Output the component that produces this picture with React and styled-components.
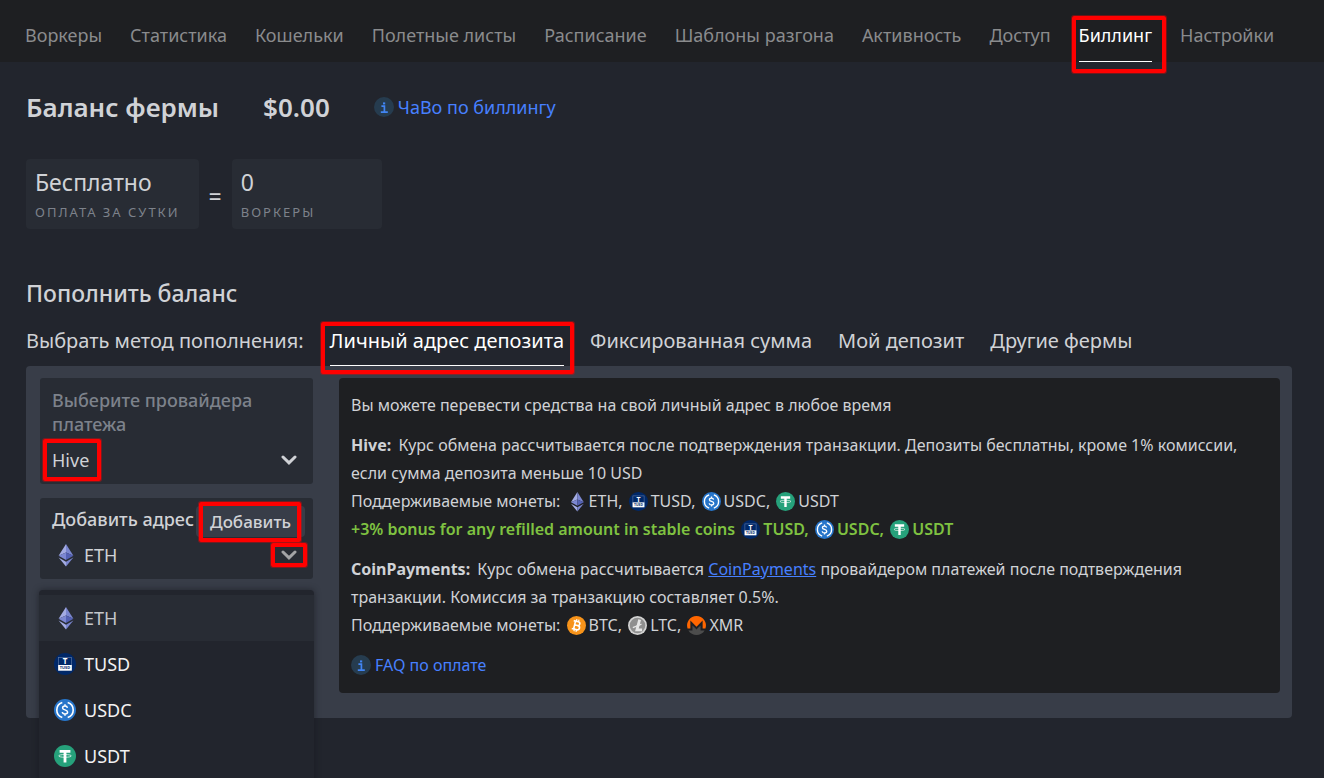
import { useState } from 'react'
import styled, { createGlobalStyle } from 'styled-components'

const navItems = [
    'Воркеры',
    'Статистика',
    'Кошельки',
    'Полетные листы',
    'Расписание',
    'Шаблоны разгона',
    'Активность',
    'Доступ',
    'Биллинг',
    'Настройки',
]

const methods = ['Личный адрес депозита', 'Фиксированная сумма', 'Мой депозит', 'Другие фермы']

const addressCoins = ['ETH', 'TUSD', 'USDC', 'USDT']

function EthLogo() {
    return (
        <g transform="translate(1 0)">
            <polygon points="11,0 3.6,11.8 11,8.6" fill="#a3abe3" />
            <polygon points="11,0 18.4,11.8 11,8.6" fill="#7a86cf" />
            <polygon points="3.6,11.8 11,8.6 11,16" fill="#7c87d2" />
            <polygon points="18.4,11.8 11,8.6 11,16" fill="#5461b4" />
            <polygon points="3.6,13.6 11,17.8 11,22.5" fill="#a3abe3" />
            <polygon points="18.4,13.6 11,17.8 11,22.5" fill="#7a86cf" />
        </g>
    )
}

function TusdLogo() {
    return (
        <>
            <circle cx="11" cy="11" r="11" fill="#002868" />
            <rect x="4.5" y="4.5" width="13" height="13" fill="none" stroke="#5b76a3" strokeWidth="0.7" />
            <rect x="4.2" y="12" width="13.6" height="5.6" fill="#fff" />
            <text x="11" y="11" textAnchor="middle" fontSize="8" fontWeight="700" fill="#fff">T</text>
            <text x="11" y="16.4" textAnchor="middle" fontSize="4" fontWeight="700" fill="#002868">TUSD</text>
        </>
    )
}

function UsdcLogo() {
    return (
        <>
            <circle cx="11" cy="11" r="11" fill="#2775ca" />
            <path d="M8.3 3.4a8 8 0 0 0 0 15.2M13.7 3.4a8 8 0 0 1 0 15.2" fill="none" stroke="#fff" strokeWidth="1.6" />
            <path
                d="M13.4 8.9c-.2-1.2-1-1.8-2.4-1.8-1.5 0-2.4.7-2.4 1.8 0 2.6 5 1.3 5 4.1 0 1.2-1 2-2.6 2-1.6 0-2.5-.7-2.7-2M11 5.3v1.8M11 15v1.8"
                fill="none"
                stroke="#fff"
                strokeWidth="1.5"
            />
        </>
    )
}

function UsdtLogo() {
    return (
        <>
            <circle cx="11" cy="11" r="11" fill="#26a17b" />
            <path d="M5.6 5h10.8v2.8h-4v9.7H9.6V7.8h-4z" fill="#fff" />
            <ellipse cx="11" cy="10.9" rx="6.4" ry="1.4" fill="none" stroke="#fff" strokeWidth="0.7" />
        </>
    )
}

function BtcLogo() {
    return (
        <>
            <circle cx="11" cy="11" r="11" fill="#f7931a" />
            <g transform="rotate(14 11 11)" fill="none" stroke="#fff" strokeWidth="1.9">
                <path d="M6.5 6.3h5.5a2.2 2.2 0 0 1 0 4.5H8.5M12 10.8h.6a2.4 2.4 0 0 1 0 4.9H6.5M8.7 6.3v9.4" />
                <path d="M9.7 3.8v2.5M12.2 3.8v2.5M9.7 15.7v2.5M12.2 15.7v2.5" strokeWidth="1.4" />
            </g>
        </>
    )
}

function LtcLogo() {
    return (
        <>
            <circle cx="11" cy="11" r="11" fill="#d3d3d3" />
            <circle cx="11" cy="11" r="9" fill="#8f8f8f" />
            <path d="M13.5 4.2 10.3 16h6" fill="none" stroke="#e6e6e6" strokeWidth="3.2" />
            <path d="M5.6 13.4l10-4" fill="none" stroke="#e6e6e6" strokeWidth="1.6" />
        </>
    )
}

function XmrLogo() {
    return (
        <>
            <path d="M11 0a11 11 0 0 0-10.4 14.5h3.3V5.3L11 12.4l7.100-7.100v9.200h3.300A11 11 0 0 0 11 0z" fill="#ff6600" />
            <path d="M9.4 14 6.3 10.9v5.8H1.6a11 11 0 0 0 18.8 0h-4.7v-5.8L12.6 14 11 15.6z" fill="#4c4c4c" />
        </>
    )
}

const logos = {
    ETH: EthLogo,
    TUSD: TusdLogo,
    USDC: UsdcLogo,
    USDT: UsdtLogo,
    BTC: BtcLogo,
    LTC: LtcLogo,
    XMR: XmrLogo,
}

function CoinIcon({ coin, size = 22 }) {
    const Logo = logos[coin]
    return (
        <CoinSvg width={size} height={size} viewBox="0 0 22 22" aria-hidden="true">
            <Logo />
        </CoinSvg>
    )
}

function CoinList({ coins }) {
    return coins.map((coin, i) => (
        <span key={coin}>
            {' '}
            <InlineCoin>
                <CoinIcon coin={coin} size={19} />
                {coin}
                {i < coins.length - 1 && ','}
            </InlineCoin>
        </span>
    ))
}

function Chevron() {
    return (
        <svg width="16" height="10" viewBox="0 0 16 10" fill="none" aria-hidden="true">
            <path d="M2 2l6 5.800L14 2" stroke="currentColor" strokeWidth="3" strokeLinecap="round" />
        </svg>
    )
}

function InfoIcon() {
    return (
        <svg width="20" height="20" viewBox="0 0 20 20" aria-hidden="true">
            <circle cx="10" cy="10" r="10" fill="#263c4f" />
            <path d="M7.4 9.2h3v5.8M6.8 15.200h7" fill="none" stroke="#4285f4" strokeWidth="1.7" />
            <rect x="9" y="5.4" width="2.2" height="2" fill="#4285f4" />
        </svg>
    )
}

function App() {
    const [method, setMethod] = useState(methods[0])
    const [coin, setCoin] = useState('ETH')
    const [open, setOpen] = useState(true)

    return (
        <Container>
            <GlobalStyle />
            <Nav>
                {navItems.map((item) => (
                    <NavLink key={item} href="#" $active={item === 'Биллинг'}>
                        {item}
                        {item === 'Биллинг' && <Marker $inset="16px -14px -12px -7px" />}
                    </NavLink>
                ))}
            </Nav>
            <Wrapper>
                <Header>
                    <Title>Баланс фермы</Title>
                    <Balance>$0.00</Balance>
                    <InfoLink href="#" $size="18px">
                        <InfoIcon />
                        ЧаВо по биллингу
                    </InfoLink>
                </Header>
                <Stats>
                    <Stat>
                        <StatValue>Бесплатно</StatValue>
                        <StatName>Оплата за сутки</StatName>
                    </Stat>
                    <Equals>=</Equals>
                    <Stat>
                        <StatValue>0</StatValue>
                        <StatName>Воркеры</StatName>
                    </Stat>
                </Stats>

                <SubTitle>Пополнить баланс</SubTitle>
                <Methods>
                    <span>Выбрать метод пополнения:</span>
                    {methods.map((item) => (
                        <Method key={item} type="button" $active={item === method} onClick={() => setMethod(item)}>
                            {item}
                            {item === methods[0] && <Marker $inset="-4px -10px -9px -9px" />}
                        </Method>
                    ))}
                </Methods>

                <Panel>
                    <Side>
                        <Card>
                            <ProviderLabel htmlFor="provider">Выберите провайдера платежа</ProviderLabel>
                            <SelectRow>
                                <Select id="provider" defaultValue="Hive">
                                    <option>Hive</option>
                                    <option>CoinPayments</option>
                                </Select>
                                <SelectArrow>
                                    <Chevron />
                                </SelectArrow>
                                <Marker $inset="3px auto 2px -9px" $width="58px" />
                            </SelectRow>
                        </Card>
                        <AddressCard>
                            <AddressTop>
                                <AddressLabel id="address-label">Добавить адрес</AddressLabel>
                                <AddButton type="button">
                                    Добавить
                                    <Marker $inset="-4px 4px -5px 3px" />
                                </AddButton>
                            </AddressTop>
                            <CoinButton
                                type="button"
                                aria-labelledby="address-label"
                                aria-haspopup="listbox"
                                aria-expanded={open}
                                onClick={() => setOpen(!open)}
                            >
                                <CoinIcon coin={coin} />
                                <CoinName>{coin}</CoinName>
                                <Arrow>
                                    <Chevron />
                                    <Marker $inset="-7px -10px" />
                                </Arrow>
                            </CoinButton>
                            {open && (
                                <Menu role="listbox" aria-labelledby="address-label">
                                    {addressCoins.map((item) => (
                                        <Option
                                            key={item}
                                            role="option"
                                            aria-selected={item === coin}
                                            $selected={item === coin}
                                            onClick={() => setCoin(item)}
                                        >
                                            <CoinIcon coin={item} />
                                            <CoinName>{item}</CoinName>
                                        </Option>
                                    ))}
                                </Menu>
                            )}
                        </AddressCard>
                    </Side>
                    <Info>
                        <Text>Вы можете перевести средства на свой личный адрес в любое время</Text>
                        <Text>
                            <Provider>Hive:</Provider> Курс обмена рассчитывается после подтверждения транзакции.
                            Депозиты бесплатны, кроме 1% комиссии, если сумма депозита меньше 10 USD
                            <br />
                            Поддерживаемые монеты:
                            <CoinList coins={['ETH', 'TUSD', 'USDC', 'USDT']} />
                            <br />
                            <Bonus>
                                +3% bonus for any refilled amount in stable coins
                                <CoinList coins={['TUSD', 'USDC', 'USDT']} />
                            </Bonus>
                        </Text>
                        <Text>
                            <Provider>CoinPayments:</Provider> Курс обмена рассчитывается{' '}
                            <TextLink href="#">CoinPayments</TextLink> провайдером платежей после подтверждения
                            транзакции. Комиссия за транзакцию составляет 0.5%.
                            <br />
                            Поддерживаемые монеты:
                            <CoinList coins={['BTC', 'LTC', 'XMR']} />
                        </Text>
                        <InfoLink href="#" $size="16px">
                            <InfoIcon />
                            FAQ по оплате
                        </InfoLink>
                    </Info>
                </Panel>
            </Wrapper>
        </Container>
    )
}

const GlobalStyle = createGlobalStyle`
  html {
    scrollbar-width: none;
  }
  body {
    margin: 0;
    background-color: #22252d;
  }
  *, *::before, *::after {
    box-sizing: border-box;
  }
  button, select {
    font: inherit;
    color: inherit;
    border: none;
    background: none;
    padding: 0;
    cursor: pointer;
  }
`

const Container = styled.div`
  min-height: 100vh;
  font-family: "Noto Sans", "Open Sans", sans-serif;
  font-size: 16px;
  color: #d0d2d6;
`
/* red frame drawn around the control the guide points at */
const Marker = styled.span.attrs({ 'aria-hidden': true })`
  position: absolute;
  inset: ${(props) => props.$inset};
  width: ${(props) => props.$width};
  border: 4px solid #ff0000;
  border-radius: 2px;
  box-shadow: 0 0 0 1px rgba(255, 0, 0, 0.35);
  pointer-events: none;
  z-index: 3;
`
const Nav = styled.nav`
  display: flex;
  gap: 28px;
  padding: 0 25px;
  background-color: #1e1f22;
`
const NavLink = styled.a`
  position: relative;
  padding: 22px 0 13px;
  border-bottom: 1px solid ${(props) => (props.$active ? '#fff' : 'transparent')};
  font-size: 18px;
  line-height: 26px;
  white-space: nowrap;
  text-decoration: none;
  color: ${(props) => (props.$active ? '#fff' : '#8a8b8d')};
`
const Wrapper = styled.main`
  padding: 27px 32px 60px 26px;
`
const Header = styled.div`
  display: flex;
  align-items: center;
  gap: 44px;
  line-height: 36px;
`
const Title = styled.h1`
  margin: 0;
  font-size: 26px;
  font-weight: 600;
`
const Balance = styled.div`
  font-size: 26px;
  font-weight: 600;
`
const InfoLink = styled.a`
  display: flex;
  align-items: center;
  gap: 4px;
  font-size: ${(props) => props.$size};
  text-decoration: none;
  color: #4780ff;
`
const Stats = styled.div`
  display: flex;
  align-items: center;
  gap: 10px;
  margin-top: 34px;
`
const Stat = styled.div`
  min-width: 150px;
  padding: 6px 19px 4px 9px;
  border-radius: 4px;
  background-color: #282c34;
`
const StatValue = styled.div`
  font-size: 23px;
  line-height: 34px;
`
const StatName = styled.div`
  font-size: 13px;
  line-height: 26px;
  letter-spacing: 2px;
  text-transform: uppercase;
  color: #7d828b;
`
const Equals = styled.div`
  padding-top: 4px;
  font-size: 23px;
`
const SubTitle = styled.h2`
  margin: 48px 0 17px;
  font-size: 23px;
  line-height: 32px;
  font-weight: 500;
`
const Methods = styled.div`
  display: flex;
  gap: 26px;
  font-size: 20px;
  line-height: 30px;
`
const Method = styled.button`
  position: relative;
  padding-bottom: 9px;
  border-bottom: 1px solid ${(props) => (props.$active ? '#fff' : 'transparent')};
  color: ${(props) => props.$active && '#fff'};
`
const Panel = styled.section`
  display: flex;
  align-items: flex-start;
  gap: 26px;
  padding: 12px 12px 25px 14px;
  border-radius: 4px;
  background-color: #383d48;
`
const Side = styled.div`
  display: flex;
  flex-direction: column;
  flex: 0 0 273px;
  gap: 14px;
`
const Card = styled.div`
  padding: 10px 12px 1px;
  border-radius: 3px;
  background-color: #282c34;
`
const ProviderLabel = styled.label`
  display: block;
  font-size: 18px;
  line-height: 24px;
  font-weight: 500;
  color: #7d828b;
`
const SelectRow = styled.div`
  position: relative;
  display: grid;
  align-items: center;
`
const Select = styled.select`
  grid-area: 1 / 1;
  width: 100%;
  height: 47px;
  font-size: 18px;
  appearance: none;
`
const SelectArrow = styled.span`
  grid-area: 1 / 1;
  display: flex;
  justify-self: end;
  margin-right: 4px;
  pointer-events: none;
`
const AddressCard = styled.div`
  position: relative;
  padding: 8px 8px 7px 12px;
  border-radius: 3px;
  background-color: #282c34;
`
const AddressTop = styled.div`
  display: flex;
  align-items: flex-start;
  justify-content: space-between;
`
const AddressLabel = styled.span`
  font-size: 18px;
  line-height: 27px;
  font-weight: 500;
  white-space: nowrap;
`
const AddButton = styled.button`
  position: relative;
  height: 31px;
  padding: 0 14px;
  border-radius: 4px;
  font-size: 17px;
  font-weight: 500;
  background-color: #383d48;
`
const CoinButton = styled.button`
  display: flex;
  align-items: center;
  width: 100%;
  height: 35px;
  padding: 0 8px 0 2px;
  text-align: left;
`
const CoinSvg = styled.svg`
  flex: none;
  overflow: visible;
`
const CoinName = styled.span`
  flex: 1;
  padding-left: 8px;
  font-size: 18px;
`
const Arrow = styled.span`
  position: relative;
  display: flex;
  color: #a3a4a6;
`
const Menu = styled.ul`
  position: absolute;
  top: calc(100% + 11px);
  left: -1px;
  right: -1px;
  z-index: 2;
  margin: 0;
  padding: 5px 0;
  border-radius: 4px;
  list-style: none;
  background-color: #22252d;
  box-shadow: 0 0 6px rgba(20, 22, 26, 0.6);
`
const Option = styled.li`
  display: flex;
  align-items: center;
  height: 46px;
  padding: 0 15px;
  color: ${(props) => (props.$selected ? '#c4c6ca' : '#f2f2f2')};
  background-color: ${(props) => props.$selected && '#282c34'};
  cursor: pointer;
`
const Info = styled.div`
  flex: 1;
  min-width: 0;
  padding: 13px 12px 14px;
  border-radius: 4px;
  line-height: 28px;
  background-color: #1e1f22;
`
const Text = styled.p`
  margin: 0 0 12px;
`
const Provider = styled.b`
  margin-right: 3px;
`
const InlineCoin = styled.span`
  margin-left: 2px;
  white-space: nowrap;

  svg {
    margin-right: 3px;
    vertical-align: -4px;
  }
`
const Bonus = styled.span`
  font-weight: 600;
  color: #7fc241;
`
const TextLink = styled.a`
  color: #4780ff;
`

export default App
